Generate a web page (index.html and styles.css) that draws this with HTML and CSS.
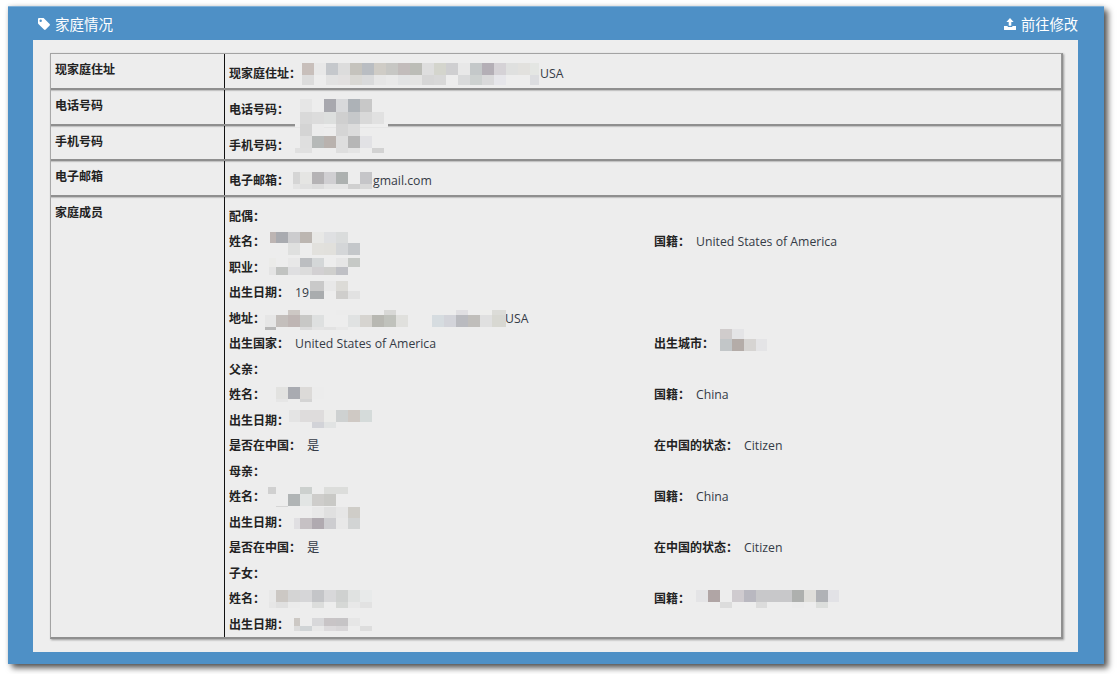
FILE: index.html
```html
<!DOCTYPE html>
<html lang="zh">
<head>
<meta charset="utf-8">
<title>家庭情况</title>
<link rel="stylesheet" href="styles.css">
</head>
<body>
<section class="panel">
  <header class="panel-head">
    <h2 class="panel-title">
      <svg class="icon" viewBox="0 0 12 12"><path fill-rule="evenodd" fill="#fff" d="M0 1.2C0 .5.5 0 1.2 0h3.9c.4 0 .7.1 1 .4l5.5 5.5c.5.5.5 1.200 0 1.700l-3.900 3.900c-.5.5-1.200.5-1.700 0L.4 6C.1 5.700 0 5.400 0 5zM2.700 1.500a1.200 1.200 0 1 0 0 2.400 1.200 1.200 0 0 0 0-2.400z"/></svg>
      家庭情况
    </h2>
    <a class="panel-link">
      <svg class="icon" viewBox="0 0 12 12"><path fill="#fff" d="M6 0l3.600 3.900H7.300v3.900H4.700V3.900H2.400zM0 8h3.700v.9h4.600V8H12v3.400c0 .3-.2.6-.6.6H.6c-.4 0-.6-.3-.6-.6z"/></svg>
      前往修改
    </a>
  </header>
  <div class="panel-body">
    <div class="info">
      <div class="row">
        <div class="row-name">现家庭住址</div>
        <div class="row-value"><b class="key">现家庭住址：</b><span class="addr">USA</span></div>
      </div>
      <div class="row">
        <div class="row-name">电话号码</div>
        <div class="row-value"><b class="key">电话号码：</b></div>
      </div>
      <div class="row">
        <div class="row-name">手机号码</div>
        <div class="row-value"><b class="key">手机号码：</b></div>
      </div>
      <div class="row">
        <div class="row-name">电子邮箱</div>
        <div class="row-value"><b class="key">电子邮箱：</b><span class="mail">gmail.com</span></div>
      </div>
      <div class="row row-family">
        <div class="row-name">家庭成员</div>
        <div class="family">
          <div class="line"><div><b class="key">配偶：</b></div></div>
          <div class="line"><div><b class="key">姓名：</b></div><div><b class="key gap">国籍：</b>United States of America</div></div>
          <div class="line"><div><b class="key">职业：</b></div></div>
          <div class="line"><div><b class="key gap">出生日期：</b>19</div></div>
          <div class="line"><div><b class="key">地址：</b><span class="addr2">USA</span></div></div>
          <div class="line"><div><b class="key gap">出生国家：</b>United States of America</div><div><b class="key">出生城市：</b></div></div>
          <div class="line"><div><b class="key">父亲：</b></div></div>
          <div class="line"><div><b class="key">姓名：</b></div><div><b class="key gap">国籍：</b>China</div></div>
          <div class="line"><div><b class="key">出生日期：</b></div></div>
          <div class="line"><div><b class="key gap">是否在中国：</b>是</div><div><b class="key gap">在中国的状态：</b>Citizen</div></div>
          <div class="line"><div><b class="key">母亲：</b></div></div>
          <div class="line"><div><b class="key">姓名：</b></div><div><b class="key gap">国籍：</b>China</div></div>
          <div class="line"><div><b class="key">出生日期：</b></div></div>
          <div class="line"><div><b class="key gap">是否在中国：</b>是</div><div><b class="key gap">在中国的状态：</b>Citizen</div></div>
          <div class="line"><div><b class="key">子女：</b></div></div>
          <div class="line"><div><b class="key">姓名：</b></div><div><b class="key">国籍：</b></div></div>
          <div class="line"><div><b class="key">出生日期：</b></div></div>
        </div>
      </div>
    </div>
  </div>
</section>

<svg class="redactions" width="1119" height="674" viewBox="0 0 1119 674" shape-rendering="crispEdges" aria-hidden="true">
  <!-- home address -->
  <g>
    <rect x="302" y="63" width="12" height="12" fill="#c8bfbb"/><rect x="314" y="63" width="12" height="12" fill="#e8e8e8"/><rect x="326" y="63" width="12" height="12" fill="#c5c8cc"/><rect x="338" y="63" width="12" height="12" fill="#dcdcdc"/><rect x="350" y="63" width="12" height="12" fill="#c5c3bd"/><rect x="362" y="63" width="12" height="12" fill="#b9bdc2"/><rect x="374" y="63" width="12" height="12" fill="#cfccc6"/><rect x="386" y="63" width="12" height="12" fill="#c7c7c4"/><rect x="398" y="63" width="12" height="12" fill="#c2bcbb"/><rect x="410" y="63" width="12" height="12" fill="#bcbdb7"/><rect x="422" y="63" width="12" height="12" fill="#dedede"/><rect x="434" y="63" width="12" height="12" fill="#d4d5cd"/><rect x="446" y="63" width="12" height="12" fill="#cfcfd1"/><rect x="458" y="63" width="12" height="12" fill="#e8e8e8"/><rect x="470" y="63" width="12" height="12" fill="#c4c8c9"/><rect x="482" y="63" width="12" height="12" fill="#b4afb6"/><rect x="494" y="63" width="12" height="12" fill="#d5d2d6"/><rect x="506" y="63" width="12" height="12" fill="#dfe0df"/><rect x="518" y="63" width="12" height="12" fill="#e2e1de"/><rect x="530" y="63" width="9" height="12" fill="#e4e6e3"/>
    <rect x="302" y="75" width="12" height="10" fill="#dcdcdc"/><rect x="326" y="75" width="12" height="10" fill="#e2e2e2"/><rect x="338" y="75" width="12" height="10" fill="#e2e0e0"/><rect x="350" y="75" width="12" height="10" fill="#d9d8d4"/><rect x="362" y="75" width="12" height="10" fill="#d9dadb"/><rect x="374" y="75" width="12" height="10" fill="#e6e6e6"/><rect x="386" y="75" width="12" height="10" fill="#e9e9e9"/><rect x="398" y="75" width="12" height="10" fill="#e2e3e4"/><rect x="410" y="75" width="12" height="10" fill="#e4e4e3"/><rect x="422" y="75" width="12" height="10" fill="#d6d6d6"/><rect x="434" y="75" width="12" height="10" fill="#d8d8d8"/><rect x="458" y="75" width="12" height="10" fill="#d9dadb"/><rect x="470" y="75" width="12" height="10" fill="#cdd1d0"/><rect x="482" y="75" width="12" height="10" fill="#d9d9da"/><rect x="494" y="75" width="12" height="10" fill="#e6e6ea"/><rect x="530" y="75" width="9" height="10" fill="#dcdde0"/>
  </g>
  <!-- phone numbers -->
  <g>
    <rect x="295" y="122" width="93" height="5" fill="#eeeeee"/>
    <rect x="300" y="99" width="12" height="13" fill="#e6e6e6"/><rect x="324" y="99" width="12" height="13" fill="#a8a8ae"/><rect x="336" y="99" width="12" height="13" fill="#d8d9db"/><rect x="348" y="99" width="12" height="13" fill="#adb2b7"/><rect x="360" y="99" width="12" height="13" fill="#c8c8c8"/>
    <rect x="300" y="112" width="12" height="12" fill="#d9d9d9"/><rect x="312" y="112" width="12" height="12" fill="#dcdcdc"/><rect x="324" y="112" width="12" height="12" fill="#dddfde"/><rect x="336" y="112" width="12" height="12" fill="#cfcfcf"/><rect x="348" y="112" width="12" height="12" fill="#c6c8ca"/><rect x="360" y="112" width="12" height="12" fill="#d9d9d9"/><rect x="372" y="112" width="12" height="12" fill="#e1e1e1"/>
    <rect x="300" y="124" width="12" height="12" fill="#d4d4d4"/><rect x="312" y="124" width="12" height="12" fill="#ececec"/><rect x="336" y="124" width="12" height="12" fill="#d5d5d5"/><rect x="348" y="124" width="12" height="12" fill="#dcdcdc"/>
    <rect x="300" y="136" width="12" height="12" fill="#dfdfdf"/><rect x="312" y="136" width="12" height="12" fill="#b6b9b8"/><rect x="324" y="136" width="12" height="12" fill="#b9b2ae"/><rect x="336" y="136" width="12" height="12" fill="#dedede"/><rect x="348" y="136" width="12" height="12" fill="#b6b6b6"/><rect x="360" y="136" width="12" height="12" fill="#e2e2e5"/>
    <rect x="295" y="148" width="17" height="5" fill="#e0e0e0"/><rect x="336" y="148" width="12" height="5" fill="#dedede"/><rect x="348" y="148" width="12" height="5" fill="#e4e4e4"/><rect x="372" y="148" width="12" height="5" fill="#d2d2d2"/>
  </g>
  <!-- email -->
  <g>
    <rect x="293" y="172" width="7" height="12" fill="#d5d5d5"/><rect x="300" y="172" width="12" height="12" fill="#e5e5e3"/><rect x="312" y="172" width="12" height="12" fill="#b5b3b5"/><rect x="324" y="172" width="12" height="12" fill="#d0cfd2"/><rect x="336" y="172" width="12" height="12" fill="#adb1b0"/><rect x="360" y="172" width="12" height="12" fill="#c5c5c8"/>
    <rect x="293" y="184" width="7" height="5" fill="#e4e4e4"/><rect x="300" y="184" width="12" height="5" fill="#e0e0e0"/><rect x="312" y="184" width="12" height="5" fill="#dcdcdc"/><rect x="324" y="184" width="12" height="5" fill="#e4e4e4"/><rect x="336" y="184" width="12" height="5" fill="#e4e4e4"/><rect x="348" y="184" width="12" height="5" fill="#d0d0d0"/><rect x="360" y="184" width="12" height="5" fill="#d8d8d8"/>
  </g>
  <!-- spouse -->
  <g>
    <rect x="270" y="232" width="6" height="11" fill="#bdb5b3"/><rect x="276" y="232" width="12" height="11" fill="#a9abb0"/><rect x="288" y="232" width="12" height="11" fill="#ccccce"/><rect x="300" y="232" width="12" height="11" fill="#bcb6b1"/><rect x="312" y="232" width="12" height="11" fill="#e8e8e6"/><rect x="324" y="232" width="12" height="11" fill="#dfe0e2"/><rect x="336" y="232" width="12" height="11" fill="#dadcdc"/>
    <rect x="288" y="243" width="12" height="12" fill="#dfe0df"/><rect x="312" y="243" width="12" height="12" fill="#e2e1dd"/><rect x="324" y="243" width="12" height="12" fill="#e1e0dc"/><rect x="336" y="243" width="12" height="12" fill="#d4d6d8"/><rect x="348" y="243" width="12" height="12" fill="#c4c7ca"/>
    <rect x="269" y="258" width="7" height="9" fill="#ebebe9"/><rect x="288" y="258" width="12" height="9" fill="#e8e8e8"/><rect x="300" y="258" width="12" height="9" fill="#bcbec1"/><rect x="312" y="258" width="12" height="9" fill="#d4d7d8"/><rect x="336" y="258" width="12" height="9" fill="#e6e6e6"/><rect x="348" y="258" width="12" height="9" fill="#c6c9c6"/>
    <rect x="269" y="267" width="7" height="8" fill="#e4e4e4"/><rect x="276" y="267" width="12" height="8" fill="#c1c3c1"/><rect x="288" y="267" width="12" height="8" fill="#dfdfe1"/><rect x="300" y="267" width="12" height="8" fill="#dcdcdc"/><rect x="312" y="267" width="12" height="8" fill="#d2d0d2"/><rect x="324" y="267" width="12" height="8" fill="#cfcfcd"/><rect x="336" y="267" width="12" height="8" fill="#bfc0c5"/>
    <rect x="310" y="281" width="14" height="10" fill="#c9c9c9"/><rect x="324" y="281" width="12" height="10" fill="#e8e8e8"/><rect x="336" y="281" width="12" height="10" fill="#dcdbd7"/>
    <rect x="310" y="291" width="14" height="8" fill="#a9acae"/><rect x="336" y="291" width="12" height="8" fill="#cfcecc"/><rect x="348" y="291" width="12" height="8" fill="#e2e2e2"/>
    <rect x="288" y="310" width="12" height="5" fill="#cdc8c4"/><rect x="300" y="310" width="12" height="5" fill="#ececec"/><rect x="336" y="310" width="24" height="5" fill="#ececec"/><rect x="384" y="310" width="12" height="5" fill="#d8d8d6"/><rect x="456" y="310" width="12" height="5" fill="#e0dfe2"/><rect x="480" y="310" width="12" height="5" fill="#eeeeec"/><rect x="492" y="310" width="14" height="5" fill="#dcdcd8"/>
    <rect x="265" y="315" width="11" height="12" fill="#e6e6e6"/><rect x="276" y="315" width="12" height="12" fill="#c4bfbc"/><rect x="288" y="315" width="12" height="12" fill="#bfb6b4"/><rect x="300" y="315" width="12" height="12" fill="#c8c8c6"/><rect x="312" y="315" width="12" height="12" fill="#dee0e0"/><rect x="348" y="315" width="12" height="12" fill="#e0e2e2"/><rect x="360" y="315" width="12" height="12" fill="#d6d4d0"/><rect x="372" y="315" width="12" height="12" fill="#b8b8b2"/><rect x="384" y="315" width="12" height="12" fill="#c0c2bc"/><rect x="396" y="315" width="12" height="12" fill="#e0e0dd"/><rect x="432" y="315" width="12" height="12" fill="#d6dce0"/><rect x="444" y="315" width="12" height="12" fill="#d3d4da"/><rect x="456" y="315" width="12" height="12" fill="#babbc0"/><rect x="468" y="315" width="12" height="12" fill="#c0bebb"/><rect x="480" y="315" width="12" height="12" fill="#e0e0e0"/><rect x="492" y="315" width="14" height="12" fill="#d8d8d2"/>
    <rect x="265" y="327" width="11" height="3" fill="#b8b8b8"/><rect x="300" y="327" width="12" height="3" fill="#dcdcdc"/><rect x="312" y="327" width="12" height="3" fill="#e4e4e4"/><rect x="324" y="327" width="12" height="3" fill="#e2e2e2"/><rect x="336" y="327" width="12" height="3" fill="#e8e8e8"/>
    <rect x="720" y="329" width="12" height="10" fill="#d0cccc"/><rect x="732" y="329" width="12" height="10" fill="#e4e4e6"/>
    <rect x="720" y="339" width="12" height="12" fill="#c2c6c8"/><rect x="732" y="339" width="12" height="12" fill="#b4aca8"/><rect x="744" y="339" width="12" height="12" fill="#d6d4d2"/><rect x="756" y="339" width="11" height="12" fill="#e4e4e6"/>
  </g>
  <!-- father -->
  <g>
    <rect x="276" y="387" width="12" height="12" fill="#e2e2e0"/><rect x="288" y="387" width="12" height="12" fill="#a9abb1"/><rect x="300" y="387" width="12" height="12" fill="#dcdad8"/><rect x="312" y="387" width="12" height="12" fill="#ececec"/>
    <rect x="276" y="399" width="12" height="3" fill="#e6e6e6"/><rect x="300" y="399" width="12" height="3" fill="#d4d4d4"/>
    <rect x="289" y="410" width="11" height="12" fill="#e4e4e4"/><rect x="300" y="410" width="24" height="12" fill="#dedcdc"/><rect x="324" y="410" width="12" height="12" fill="#ebebe9"/><rect x="336" y="410" width="12" height="12" fill="#ced1d1"/><rect x="348" y="410" width="12" height="12" fill="#cfc9c4"/><rect x="360" y="410" width="12" height="12" fill="#d5dbda"/>
    <rect x="312" y="422" width="12" height="6" fill="#d2d3d8"/><rect x="324" y="422" width="12" height="6" fill="#e1e3e3"/>
  </g>
  <!-- mother -->
  <g>
    <rect x="268" y="487" width="8" height="7" fill="#d0d0d0"/><rect x="300" y="487" width="12" height="7" fill="#ccd0ce"/><rect x="324" y="487" width="24" height="7" fill="#dcdddb"/>
    <rect x="288" y="494" width="12" height="12" fill="#b0b4b5"/><rect x="300" y="494" width="12" height="12" fill="#e2e5e4"/><rect x="312" y="494" width="12" height="12" fill="#cecdcb"/><rect x="324" y="494" width="12" height="12" fill="#c9c9c6"/>
    <rect x="276" y="506" width="12" height="1" fill="#d6d6d6"/>
    <rect x="312" y="507" width="12" height="11" fill="#e8e8e8"/><rect x="324" y="507" width="12" height="11" fill="#e0e0e0"/><rect x="336" y="507" width="12" height="11" fill="#e6e6e6"/><rect x="348" y="507" width="12" height="11" fill="#cfcdc8"/>
    <rect x="294" y="518" width="6" height="11" fill="#e0dfe2"/><rect x="300" y="518" width="12" height="11" fill="#c6c1c4"/><rect x="312" y="518" width="12" height="11" fill="#b0aab0"/><rect x="324" y="518" width="12" height="11" fill="#cdcdd0"/><rect x="336" y="518" width="12" height="11" fill="#e8e8e8"/><rect x="348" y="518" width="12" height="11" fill="#d2d4d4"/>
  </g>
  <!-- child -->
  <g>
    <rect x="269" y="590" width="7" height="12" fill="#e8e8e8"/><rect x="276" y="590" width="12" height="12" fill="#ccc8c4"/><rect x="288" y="590" width="12" height="12" fill="#d4d4d4"/><rect x="300" y="590" width="12" height="12" fill="#d6d6d8"/><rect x="312" y="590" width="12" height="12" fill="#c4c5c8"/><rect x="324" y="590" width="12" height="12" fill="#d8d8da"/><rect x="336" y="590" width="12" height="12" fill="#cfd1d0"/><rect x="348" y="590" width="12" height="12" fill="#e0e2e1"/><rect x="360" y="590" width="12" height="12" fill="#e8eaea"/>
    <rect x="269" y="602" width="7" height="6" fill="#e6e6e6"/><rect x="276" y="602" width="12" height="6" fill="#e0e0e0"/><rect x="288" y="602" width="12" height="6" fill="#ebebeb"/><rect x="312" y="602" width="12" height="6" fill="#dcdddc"/><rect x="336" y="602" width="12" height="6" fill="#d6d8d6"/><rect x="348" y="602" width="12" height="6" fill="#e8e8e8"/><rect x="360" y="602" width="12" height="6" fill="#e2e2e2"/>
    <rect x="294" y="618" width="6" height="8" fill="#ccc8c4"/><rect x="312" y="618" width="12" height="8" fill="#d8d8da"/><rect x="324" y="618" width="12" height="8" fill="#c8c4c6"/><rect x="336" y="618" width="12" height="8" fill="#c6c4c6"/><rect x="348" y="618" width="12" height="8" fill="#e6e6e6"/>
    <rect x="294" y="626" width="6" height="5" fill="#dcdcdc"/><rect x="300" y="626" width="12" height="5" fill="#d0d4d6"/><rect x="312" y="626" width="12" height="5" fill="#e8e8e8"/><rect x="324" y="626" width="12" height="5" fill="#dcdadc"/><rect x="336" y="626" width="12" height="5" fill="#d8d6d8"/><rect x="360" y="626" width="12" height="5" fill="#dddddd"/>
    <rect x="696" y="590" width="12" height="12" fill="#e4e4e6"/><rect x="708" y="590" width="12" height="12" fill="#b0a5a5"/><rect x="732" y="590" width="12" height="12" fill="#cfcbcf"/><rect x="744" y="590" width="12" height="12" fill="#b9b8c0"/><rect x="756" y="590" width="36" height="12" fill="#c8c8ca"/><rect x="792" y="590" width="12" height="12" fill="#aeb0ae"/><rect x="804" y="590" width="12" height="12" fill="#dfdeda"/><rect x="816" y="590" width="12" height="12" fill="#b0b2b6"/><rect x="828" y="590" width="11" height="12" fill="#e2e2e6"/>
    <rect x="720" y="602" width="12" height="6" fill="#dcdcdc"/><rect x="756" y="602" width="11" height="6" fill="#dcdcdc"/><rect x="792" y="602" width="12" height="6" fill="#ebebeb"/><rect x="816" y="602" width="12" height="6" fill="#dcdedc"/>
  </g>
</svg>
</body>
</html>
```

FILE: styles.css
```css
* { box-sizing: border-box; }

html, body { margin: 0; height: 100%; }

body {
  position: relative;
  width: 1119px;
  height: 674px;
  overflow: hidden;
  padding: 6px 15px 0 8px;
  background: #fff;
  font-family: "Open Sans", "Noto Sans CJK SC", sans-serif;
  font-size: 12.25px;
  color: #353b46;
}

.panel {
  height: 658px;
  display: flex;
  flex-direction: column;
  background: #4e90c6;
  border-top: 1px solid #7fb0d8;
  box-shadow: 4px 4px 6px rgba(0, 0, 0, 0.65), 0 0 4px #ddd;
}

.panel-head {
  height: 33px;
  flex: none;
  display: flex;
  align-items: center;
  justify-content: space-between;
  padding: 0 26px 0 30px;
  color: #fff;
  font-family: "Noto Sans CJK SC", sans-serif;
}

.panel-title {
  display: flex;
  align-items: center;
  gap: 5px;
  margin: 0;
  font-size: 14.5px;
  font-weight: 400;
}

.panel-link {
  display: flex;
  align-items: center;
  gap: 5px;
  font-size: 14.25px;
}

.icon {
  width: 12px;
  height: 12px;
  flex: none;
}

.panel-body {
  flex: 1;
  margin: 0 26px 13px 25px;
  padding: 13px 15px 13px 17px;
  background: #eee;
}

.info {
  height: 100%;
  display: flex;
  flex-direction: column;
  background: #ededed;
  border: 1px solid #a3a3a3;
  border-bottom: 2px solid #8f8f8f;
  border-right: 2px solid #8f8f8f;
  box-shadow: 1px 1px 2px #999;
}

.row {
  height: 35.75px;
  flex: none;
  display: flex;
  border-bottom: 2px solid #8f8f8f;
  box-shadow: 0 1px 1px #c4c4c4;
}

.row-family {
  flex: 1;
  border-bottom: 0;
  box-shadow: none;
}

.row-name {
  width: 174px;
  flex: none;
  padding: 6px 0 0 4px;
  border-right: 1px solid #111;
  font-family: "Noto Sans CJK SC", sans-serif;
  font-weight: 700;
  font-size: 12px;
  line-height: 17px;
  color: #222;
}

.row-value {
  flex: 1;
  padding: 10px 0 0 4px;
  line-height: 17px;
}

.key {
  display: inline-block;
  font-family: "Noto Sans CJK SC", sans-serif;
  font-weight: 700;
  font-size: 12px;
  color: #222;
}

.gap { margin-right: 6px; }

.addr { padding-left: 239px; }

.mail { padding-left: 84px; }

.family {
  flex: 1;
  padding: 6px 0 0 4px;
}

.line {
  height: 25.5px;
  display: grid;
  grid-template-columns: 425px 1fr;
  align-items: center;
}

.addr2 { padding-left: 240px; }

.redactions {
  position: absolute;
  top: 0;
  left: 0;
  pointer-events: none;
}
```
